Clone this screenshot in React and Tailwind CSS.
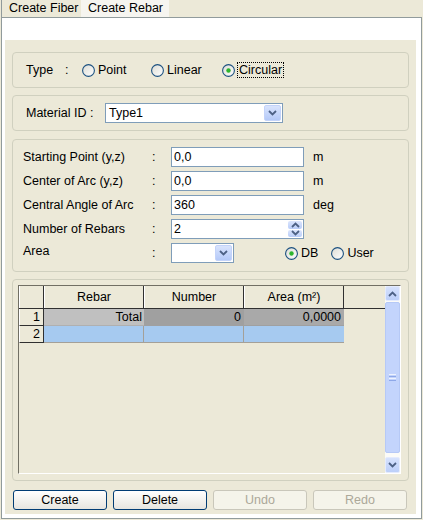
import React from 'react'

function Radio({ checked }) {
  return (
    <svg width="13" height="13" viewBox="0 0 13 13" className="shrink-0">
      <defs>
        <linearGradient id="rg" x1="0" y1="0" x2="1" y2="1">
          <stop offset="0" stopColor="#dcdcd4" />
          <stop offset="1" stopColor="#ffffff" />
        </linearGradient>
      </defs>
      <circle cx="6.5" cy="6.5" r="5.9" fill="url(#rg)" stroke="#1c5180" strokeWidth="1.1" />
      {checked && <circle cx="6.5" cy="6.5" r="2.2" fill="#2db52d" />}
    </svg>
  )
}

function Chevron({ up }) {
  return (
    <svg width="9" height="6" viewBox="0 0 9 6">
      <path
        d={up ? 'M1 5 L4.5 1.5 L8 5' : 'M1 1 L4.5 4.5 L8 1'}
        fill="none"
        stroke="#4d6185"
        strokeWidth="1.8"
      />
    </svg>
  )
}

function DropButton() {
  return (
    <div className="w-[17px] h-full flex items-center justify-center bg-linear-to-b from-[#d9e4fd] to-[#b4c9f8] border border-[#c3d3fa] rounded-[2px]">
      <Chevron />
    </div>
  )
}

function Group({ className = '', children }) {
  return (
    <div className={`border border-[#d0d0bf] rounded-[4px] ${className}`}>{children}</div>
  )
}

function Field({ label, value, unit, spinner }) {
  return (
    <div className="flex items-center h-[20px]">
      <span className="w-[129px]">{label}</span>
      <span className="w-[19px]">:</span>
      <div className="w-[133px] h-[20px] border border-[#7f9db9] bg-white flex items-center">
        <span className="flex-1 pl-[2px]">{value}</span>
        {spinner && (
          <div className="w-[16px] h-full flex flex-col p-px gap-px">
            <div className="flex-1 flex items-center justify-center bg-linear-to-b from-[#dce6fd] to-[#b8ccf8] rounded-[2px]">
              <Chevron up />
            </div>
            <div className="flex-1 flex items-center justify-center bg-linear-to-b from-[#dce6fd] to-[#b8ccf8] rounded-[2px]">
              <Chevron />
            </div>
          </div>
        )}
      </div>
      {unit && <span className="ml-[9px]">{unit}</span>}
    </div>
  )
}

function HeadCell({ w, children }) {
  return (
    <div
      className={`${w} h-full flex items-center justify-center bg-[#ece9d8] border-r border-[#303030] border-l border-l-white`}
    >
      {children}
    </div>
  )
}

function Button({ label, disabled }) {
  return (
    <div
      className={`w-[94px] h-[20px] flex items-center justify-center rounded-[3px] border ${
        disabled
          ? 'border-[#c9c7ba] text-[#aca899] bg-[#f5f4ea]'
          : 'border-[#003c74] bg-linear-to-b from-white to-[#e6e5df]'
      }`}
    >
      {label}
    </div>
  )
}

function Scrollbar() {
  return (
    <div className="w-[15px] h-full flex flex-col bg-[#fbfbf8]">
      <div className="h-[15px] flex items-center justify-center bg-linear-to-b from-[#d6e2fd] to-[#bccff9] border border-[#e4ebfd] rounded-[2px]">
        <Chevron up />
      </div>
      <div className="flex-1 mt-px mb-[4px] bg-[#c3d4fc] border border-[#b6c9f6] rounded-[2px] flex flex-col items-center justify-center gap-px">
        <div className="w-[7px] h-px bg-[#eef3fe]" />
        <div className="w-[7px] h-px bg-[#8ea8e8]" />
        <div className="w-[7px] h-px bg-[#eef3fe]" />
        <div className="w-[7px] h-px bg-[#8ea8e8]" />
      </div>
      <div className="h-[16px] flex items-center justify-center bg-linear-to-b from-[#d6e2fd] to-[#bccff9] border border-[#e4ebfd] rounded-[2px]">
        <Chevron />
      </div>
    </div>
  )
}

export default function App() {
  return (
    <div className="w-[423px] h-[520px] bg-[#ece9d8] text-[12.5px] text-black font-['Liberation_Sans',Arial,sans-serif] overflow-hidden">
      {/* tabs */}
      <div className="h-[17px] flex items-end">
        <div className="ml-px h-[17px] w-[80px] border-l border-[#919b9c] flex items-center pl-[7px] bg-[#ece9d8]">
          Create Fiber
        </div>
        <div className="h-[17px] w-[88px] flex items-center pl-[7px] bg-[#f6f5f0]">Create Rebar</div>
      </div>

      {/* tab panel */}
      <div className="ml-px w-[421px] h-[502px] border border-[#919b9c] bg-white pt-[22px]">
        <div className="ml-[3px] w-[411px] h-[474px] bg-[#ece9d8] pt-[12px] pl-[7px]">
          <Group className="w-[397px] h-[36px] flex items-center pl-[13px]">
            <span className="w-[39px]">Type</span>
            <span className="w-[17px]">:</span>
            <div className="w-[69px] flex items-center gap-[3px]">
              <Radio />
              <span>Point</span>
            </div>
            <div className="w-[71px] flex items-center gap-[3px]">
              <Radio />
              <span>Linear</span>
            </div>
            <div className="flex items-center gap-[2px]">
              <Radio checked />
              <span className="border border-dotted border-black px-px leading-[14px]">Circular</span>
            </div>
          </Group>

          <Group className="mt-[7px] w-[397px] h-[36px] flex items-center pl-[13px]">
            <span className="w-[79px]">Material ID :</span>
            <div className="w-[178px] h-[20px] border border-[#7f9db9] bg-white flex items-center p-px">
              <span className="flex-1 pl-[2px]">Type1</span>
              <DropButton />
            </div>
          </Group>

          <Group className="mt-[8px] w-[397px] h-[133px] pl-[10px] pt-[7px] flex flex-col gap-[4px]">
            <Field label="Starting Point (y,z)" value="0,0" unit="m" />
            <Field label="Center of Arc (y,z)" value="0,0" unit="m" />
            <Field label="Central Angle of Arc" value="360" unit="deg" />
            <Field label="Number of Rebars" value="2" spinner />
            <div className="flex items-center h-[20px]">
              <span className="w-[129px] -mt-[3px]">Area</span>
              <span className="w-[19px]">:</span>
              <div className="w-[63px] h-[20px] border border-[#7f9db9] bg-white flex items-center p-px">
                <span className="flex-1" />
                <DropButton />
              </div>
              <div className="ml-[51px] flex items-center gap-[3px]">
                <Radio checked />
                <span>DB</span>
              </div>
              <div className="ml-[13px] flex items-center gap-[3px]">
                <Radio />
                <span>User</span>
              </div>
            </div>
          </Group>

          <Group className="mt-[7px] w-[397px] h-[202px] pl-[5px] pt-[5px]">
            <div className="w-[383px] h-[189px] border border-t-[#716f64] border-l-[#716f64] border-r-white border-b-white flex">
              <div className="flex-1 flex flex-col">
                <div className="h-[23px] flex border-b border-[#303030]">
                  <HeadCell w="w-[25px]" />
                  <HeadCell w="w-[100px]">Rebar</HeadCell>
                  <HeadCell w="w-[100px]">Number</HeadCell>
                  <HeadCell w="w-[100px]">Area (m²)</HeadCell>
                </div>
                <div className="h-[17px] flex">
                  <div className="w-[25px] h-full flex items-center justify-end pr-[3px] bg-[#ece9d8] border-r border-b border-[#303030] border-l border-l-white">
                    1
                  </div>
                  <div className="w-[100px] h-full flex items-center justify-end pr-[2px] bg-[#c0c0c0] border-b border-[#b0b0b0]">
                    Total
                  </div>
                  <div className="w-[100px] h-full flex items-center justify-end pr-[3px] bg-[#a0a0a0] border-b border-[#a0a0a0]">
                    0
                  </div>
                  <div className="w-[100px] h-full flex items-center justify-end pr-[3px] bg-[#a9a9a9] border-b border-[#a0a0a0]">
                    0,0000
                  </div>
                </div>
                <div className="h-[17px] flex">
                  <div className="w-[25px] h-full flex items-center justify-end pr-[3px] bg-[#ece9d8] border-r border-b border-[#303030] border-l border-l-white">
                    2
                  </div>
                  <div className="w-[100px] h-full bg-[#a6caf0] border-r border-b border-[#a4a098]" />
                  <div className="w-[100px] h-full bg-[#a6caf0] border-r border-b border-[#a4a098]" />
                  <div className="w-[100px] h-full bg-[#a6caf0] border-b border-[#a4a098]" />
                </div>
              </div>
              <Scrollbar />
            </div>
          </Group>

          <div className="mt-[9px] ml-px flex gap-[6px]">
            <Button label="Create" />
            <Button label="Delete" />
            <Button label="Undo" disabled />
            <Button label="Redo" disabled />
          </div>
        </div>
      </div>
    </div>
  )
}
